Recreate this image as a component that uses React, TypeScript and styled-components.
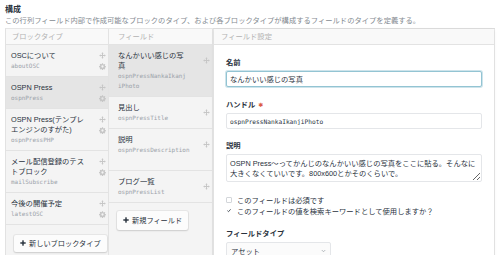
import React from "react";
import styled, { createGlobalStyle } from "styled-components";

const sans = `"Liberation Sans", "Noto Sans CJK JP", sans-serif`;
const mono = `"DejaVu Sans Mono", "Liberation Mono", monospace`;

const Global = createGlobalStyle`
  html, body { margin: 0; padding: 0; background: #fff; }
  body { font-family: ${sans}; color: #29323d; }
  * { box-sizing: border-box; }
`;

const Page = styled.div`
  width: 500px;
  height: 255px;
  overflow: hidden;
  padding: 4px 5px 0 5px;
`;

const Heading = styled.div`
  font-size: 8px;
  font-weight: bold;
  line-height: 11px;
  color: #29323d;
`;

const Instructions = styled.div`
  font-size: 7.3px;
  line-height: 11px;
  color: #858b92;
  margin-bottom: 2px;
  white-space: nowrap;
`;

const Configurator = styled.div`
  display: grid;
  grid-template-columns: 103px 104px 1fr;
  height: 240px;
  border-left: 1px solid #e2e2e2;
  border-top: 1px solid #e6e6e6;
`;

const Column = styled.div`
  display: flex;
  flex-direction: column;
  background: #f4f4f4;
  border-right: 1px solid #e3e3e3;
`;

const ColHeader = styled.div<{ $pad: number }>`
  height: 16px;
  line-height: 15px;
  padding-left: ${(p) => p.$pad}px;
  font-size: 7.3px;
  color: #b3b3b3;
  background: #f9f9f9;
  border-bottom: 1px solid #e3e3e3;
  white-space: nowrap;
`;

const Item = styled.div<{ $sel?: boolean; $pad: number; $extra?: number }>`
  display: flex;
  align-items: flex-start;
  padding: 6px 1px ${(p) => 5 + (p.$extra || 0)}px ${(p) => p.$pad}px;
  background: ${(p) => (p.$sel ? "#e5e5e5" : "transparent")};
  border-bottom: 1px solid #e3e3e3;
`;

const ItemText = styled.div`
  flex: 1;
  min-width: 0;
`;

const Title = styled.div`
  font-size: 7.3px;
  line-height: 10px;
  color: #29323d;
  white-space: nowrap;
`;

const Code = styled.div`
  font-family: ${mono};
  font-size: 5.95px;
  line-height: 10px;
  color: #9ba2a9;
  white-space: nowrap;
`;

const IconCol = styled.div<{ $top: number }>`
  display: flex;
  flex-direction: column;
  gap: 4px;
  margin-top: ${(p) => p.$top}px;
  margin-right: 1px;
  width: 7px;
  color: #c6c6c6;
`;

const ButtonArea = styled.div<{ $top: number }>`
  padding: ${(p) => p.$top}px 0 0 8px;
`;

const Button = styled.div<{ $h: number }>`
  display: inline-flex;
  align-items: center;
  gap: 3px;
  height: ${(p) => p.$h}px;
  padding: 0 6px 0 6px;
  background: #fcfcfc;
  border-radius: 2px;
  box-shadow: 0 0 0 1px rgba(0, 0, 0, 0.05), 0 1px 2px rgba(0, 0, 0, 0.12);
  font-size: 7.2px;
  color: #29323d;
  white-space: nowrap;
`;

const SettingsCol = styled.div`
  background: #f2f2f2;
  padding: 0 1px 0 1px;
  display: flex;
`;

const Panel = styled.div`
  flex: 1;
  background: #fff;
  box-shadow: 0 0 0 1px rgba(0, 0, 0, 0.04), 0 1px 3px rgba(0, 0, 0, 0.08);
  display: flex;
  flex-direction: column;
`;

const PanelBody = styled.div`
  padding: 13px 12px 0 12px;
  display: flex;
  flex-direction: column;
`;

const Field = styled.div<{ $mb: number }>`
  margin-bottom: ${(p) => p.$mb}px;
`;

const Label = styled.div`
  font-size: 7.3px;
  font-weight: bold;
  line-height: 10px;
  margin-bottom: 3px;
  color: #29323d;
  display: flex;
  align-items: center;
  gap: 3px;
`;

const Required = styled.span`
  color: #da5a47;
  font-family: "DejaVu Sans", sans-serif;
  font-size: 6px;
  line-height: 6px;
`;

const TextInput = styled.input<{ $focus?: boolean; $mono?: boolean }>`
  display: block;
  width: 100%;
  height: 16px;
  padding: 0 3px;
  border: 1px solid ${(p) => (p.$focus ? "#93c4d3" : "#e4e6e9")};
  box-shadow: ${(p) => (p.$focus ? "0 0 0 1px rgba(147,196,211,0.45)" : "none")};
  border-radius: 2px;
  font-family: ${(p) => (p.$mono ? mono : sans)};
  font-size: ${(p) => (p.$mono ? "6.2px" : "7.3px")};
  color: #29323d;
  background: #fff;
  outline: none;
`;

const TextArea = styled.textarea`
  display: block;
  width: 100%;
  height: 28px;
  padding: 4px 3px;
  border: 1px solid #e4e6e9;
  border-radius: 2px;
  font-family: ${sans};
  font-size: 7.3px;
  line-height: 10px;
  color: #29323d;
  resize: vertical;
  overflow: hidden;
  outline: none;
`;

const CheckRow = styled.div`
  display: flex;
  align-items: center;
  gap: 5px;
  height: 11px;
  font-size: 7.3px;
  color: #29323d;
  white-space: nowrap;
`;

const Box = styled.span<{ $checked?: boolean }>`
  width: 6px;
  height: 6px;
  border: 1px solid ${(p) => (p.$checked ? "transparent" : "#d3d6da")};
  border-radius: 1px;
  display: inline-flex;
  align-items: center;
  justify-content: center;
  background: #fff;
`;

const Select = styled.div`
  width: 105px;
  height: 17px;
  border: 1px solid #e4e6e9;
  border-radius: 2px;
  background: #fbfbfb;
  display: flex;
  align-items: center;
  justify-content: space-between;
  padding: 0 4px 0 4px;
  font-size: 7.3px;
  color: #29323d;
`;

const MoveIcon = () => (
  <svg width="7" height="7" viewBox="0 0 16 16" fill="currentColor">
    <path d="M8 0.5 L10.8 3.6 H9.1 V6.9 H12.4 V5.2 L15.5 8 L12.4 10.8 V9.1 H9.1 V12.4 H10.8 L8 15.5 L5.2 12.4 H6.9 V9.1 H3.6 V10.8 L0.5 8 L3.6 5.2 V6.9 H6.9 V3.6 H5.2 Z" />
  </svg>
);

const GearIcon = () => (
  <svg width="7" height="7" viewBox="0 0 16 16" fill="currentColor">
    <path
      fillRule="evenodd"
      d="M6.8 0.5h2.4l0.4 2.1 1.3 0.6 1.8-1.2 1.7 1.7-1.2 1.8 0.6 1.3 2.1 0.4v2.4l-2.1 0.4-0.6 1.3 1.2 1.8-1.7 1.7-1.8-1.2-1.3 0.6-0.4 2.1H6.8l-0.4-2.1-1.3-0.6-1.8 1.2-1.7-1.7 1.2-1.8-0.6-1.3-2.1-0.4V6.8l2.1-0.4 0.6-1.3-1.2-1.8 1.7-1.7 1.8 1.2 1.3-0.6z M8 5.4a2.6 2.6 0 1 0 0 5.2a2.6 2.6 0 1 0 0-5.2z"
    />
  </svg>
);

const PlusIcon = () => (
  <svg width="6" height="6" viewBox="0 0 10 10" fill="#29323d">
    <rect x="3.8" y="0.5" width="2.4" height="9" />
    <rect x="0.5" y="3.8" width="9" height="2.4" />
  </svg>
);

const CheckIcon = () => (
  <svg width="7" height="7" viewBox="0 0 10 10">
    <path d="M1 5.3 L3.8 8 L9 2" fill="none" stroke="#29323d" strokeWidth="2" />
  </svg>
);

const Chevron = () => (
  <svg width="5" height="4" viewBox="0 0 10 8">
    <path d="M1.5 2 L5 5.5 L8.5 2" fill="none" stroke="#9aa0a6" strokeWidth="1.4" />
  </svg>
);

type BlockType = { title: string[]; code: string; sel?: boolean };

const blockTypes: BlockType[] = [
  { title: ["OSCについて"], code: "aboutOSC" },
  { title: ["OSPN Press"], code: "ospnPress", sel: true },
  { title: ["OSPN Press(テンプレ", "エンジンのすがた)"], code: "ospnPressPHP" },
  { title: ["メール配信登録のテス", "トブロック"], code: "mailSubscribe" },
  { title: ["今後の開催予定"], code: "latestOSC" },
];

type FieldItem = { title: string[]; code: string[]; sel?: boolean; extra?: number };

const fields: FieldItem[] = [
  { title: ["なんかいい感じの写", "真"], code: ["ospnPressNankaIkanj", "iPhoto"], sel: true },
  { title: ["見出し"], code: ["ospnPressTitle"] },
  { title: ["説明"], code: ["ospnPressDescription"], extra: 10 },
  { title: ["ブログ一覧"], code: ["ospnPressList"] },
];

export default function App() {
  return (
    <>
      <Global />
      <Page>
        <Heading>構成</Heading>
        <Instructions>
          この行列フィールド内部で作成可能なブロックのタイプ、および各ブロックタイプが構成するフィールドのタイプを定義する。
        </Instructions>
        <Configurator>
          <Column>
            <ColHeader $pad={6}>ブロックタイプ</ColHeader>
            {blockTypes.map((b) => (
              <Item key={b.code} $sel={b.sel} $pad={5}>
                <ItemText>
                  {b.title.map((t) => (
                    <Title key={t}>{t}</Title>
                  ))}
                  <Code>{b.code}</Code>
                </ItemText>
                <IconCol $top={1}>
                  <MoveIcon />
                  <GearIcon />
                </IconCol>
              </Item>
            ))}
            <ButtonArea $top={7}>
              <Button $h={17}>
                <PlusIcon />
                新しいブロックタイプ
              </Button>
            </ButtonArea>
          </Column>
          <Column>
            <ColHeader $pad={9}>フィールド</ColHeader>
            {fields.map((f) => (
              <Item key={f.code[0]} $sel={f.sel} $pad={9} $extra={f.extra}>
                <ItemText>
                  {f.title.map((t) => (
                    <Title key={t}>{t}</Title>
                  ))}
                  {f.code.map((c) => (
                    <Code key={c}>{c}</Code>
                  ))}
                </ItemText>
                <IconCol $top={6}>
                  <MoveIcon />
                </IconCol>
              </Item>
            ))}
            <ButtonArea $top={6}>
              <Button $h={19}>
                <PlusIcon />
                新規フィールド
              </Button>
            </ButtonArea>
          </Column>
          <SettingsCol>
            <Panel>
              <ColHeader $pad={7}>フィールド設定</ColHeader>
              <PanelBody>
                <Field $mb={13}>
                  <Label>名前</Label>
                  <TextInput $focus readOnly defaultValue="なんかいい感じの写真" />
                </Field>
                <Field $mb={12}>
                  <Label>
                    ハンドル <Required>✱</Required>
                  </Label>
                  <TextInput $mono readOnly defaultValue="ospnPressNankaIkanjiPhoto" />
                </Field>
                <Field $mb={12}>
                  <Label>説明</Label>
                  <TextArea
                    readOnly
                    wrap="off"
                    defaultValue={
                      "OSPN Press〜ってかんじのなんかいい感じの写真をここに貼る。そんなに\n大きくなくていいです。800x600とかそのくらいで。"
                    }
                  />
                </Field>
                <Field $mb={13}>
                  <CheckRow>
                    <Box />
                    このフィールドは必須です
                  </CheckRow>
                  <CheckRow>
                    <Box $checked>
                      <CheckIcon />
                    </Box>
                    このフィールドの値を検索キーワードとして使用しますか？
                  </CheckRow>
                </Field>
                <Field $mb={0}>
                  <Label>フィールドタイプ</Label>
                  <Select>
                    アセット
                    <Chevron />
                  </Select>
                </Field>
              </PanelBody>
            </Panel>
          </SettingsCol>
        </Configurator>
      </Page>
    </>
  );
}
